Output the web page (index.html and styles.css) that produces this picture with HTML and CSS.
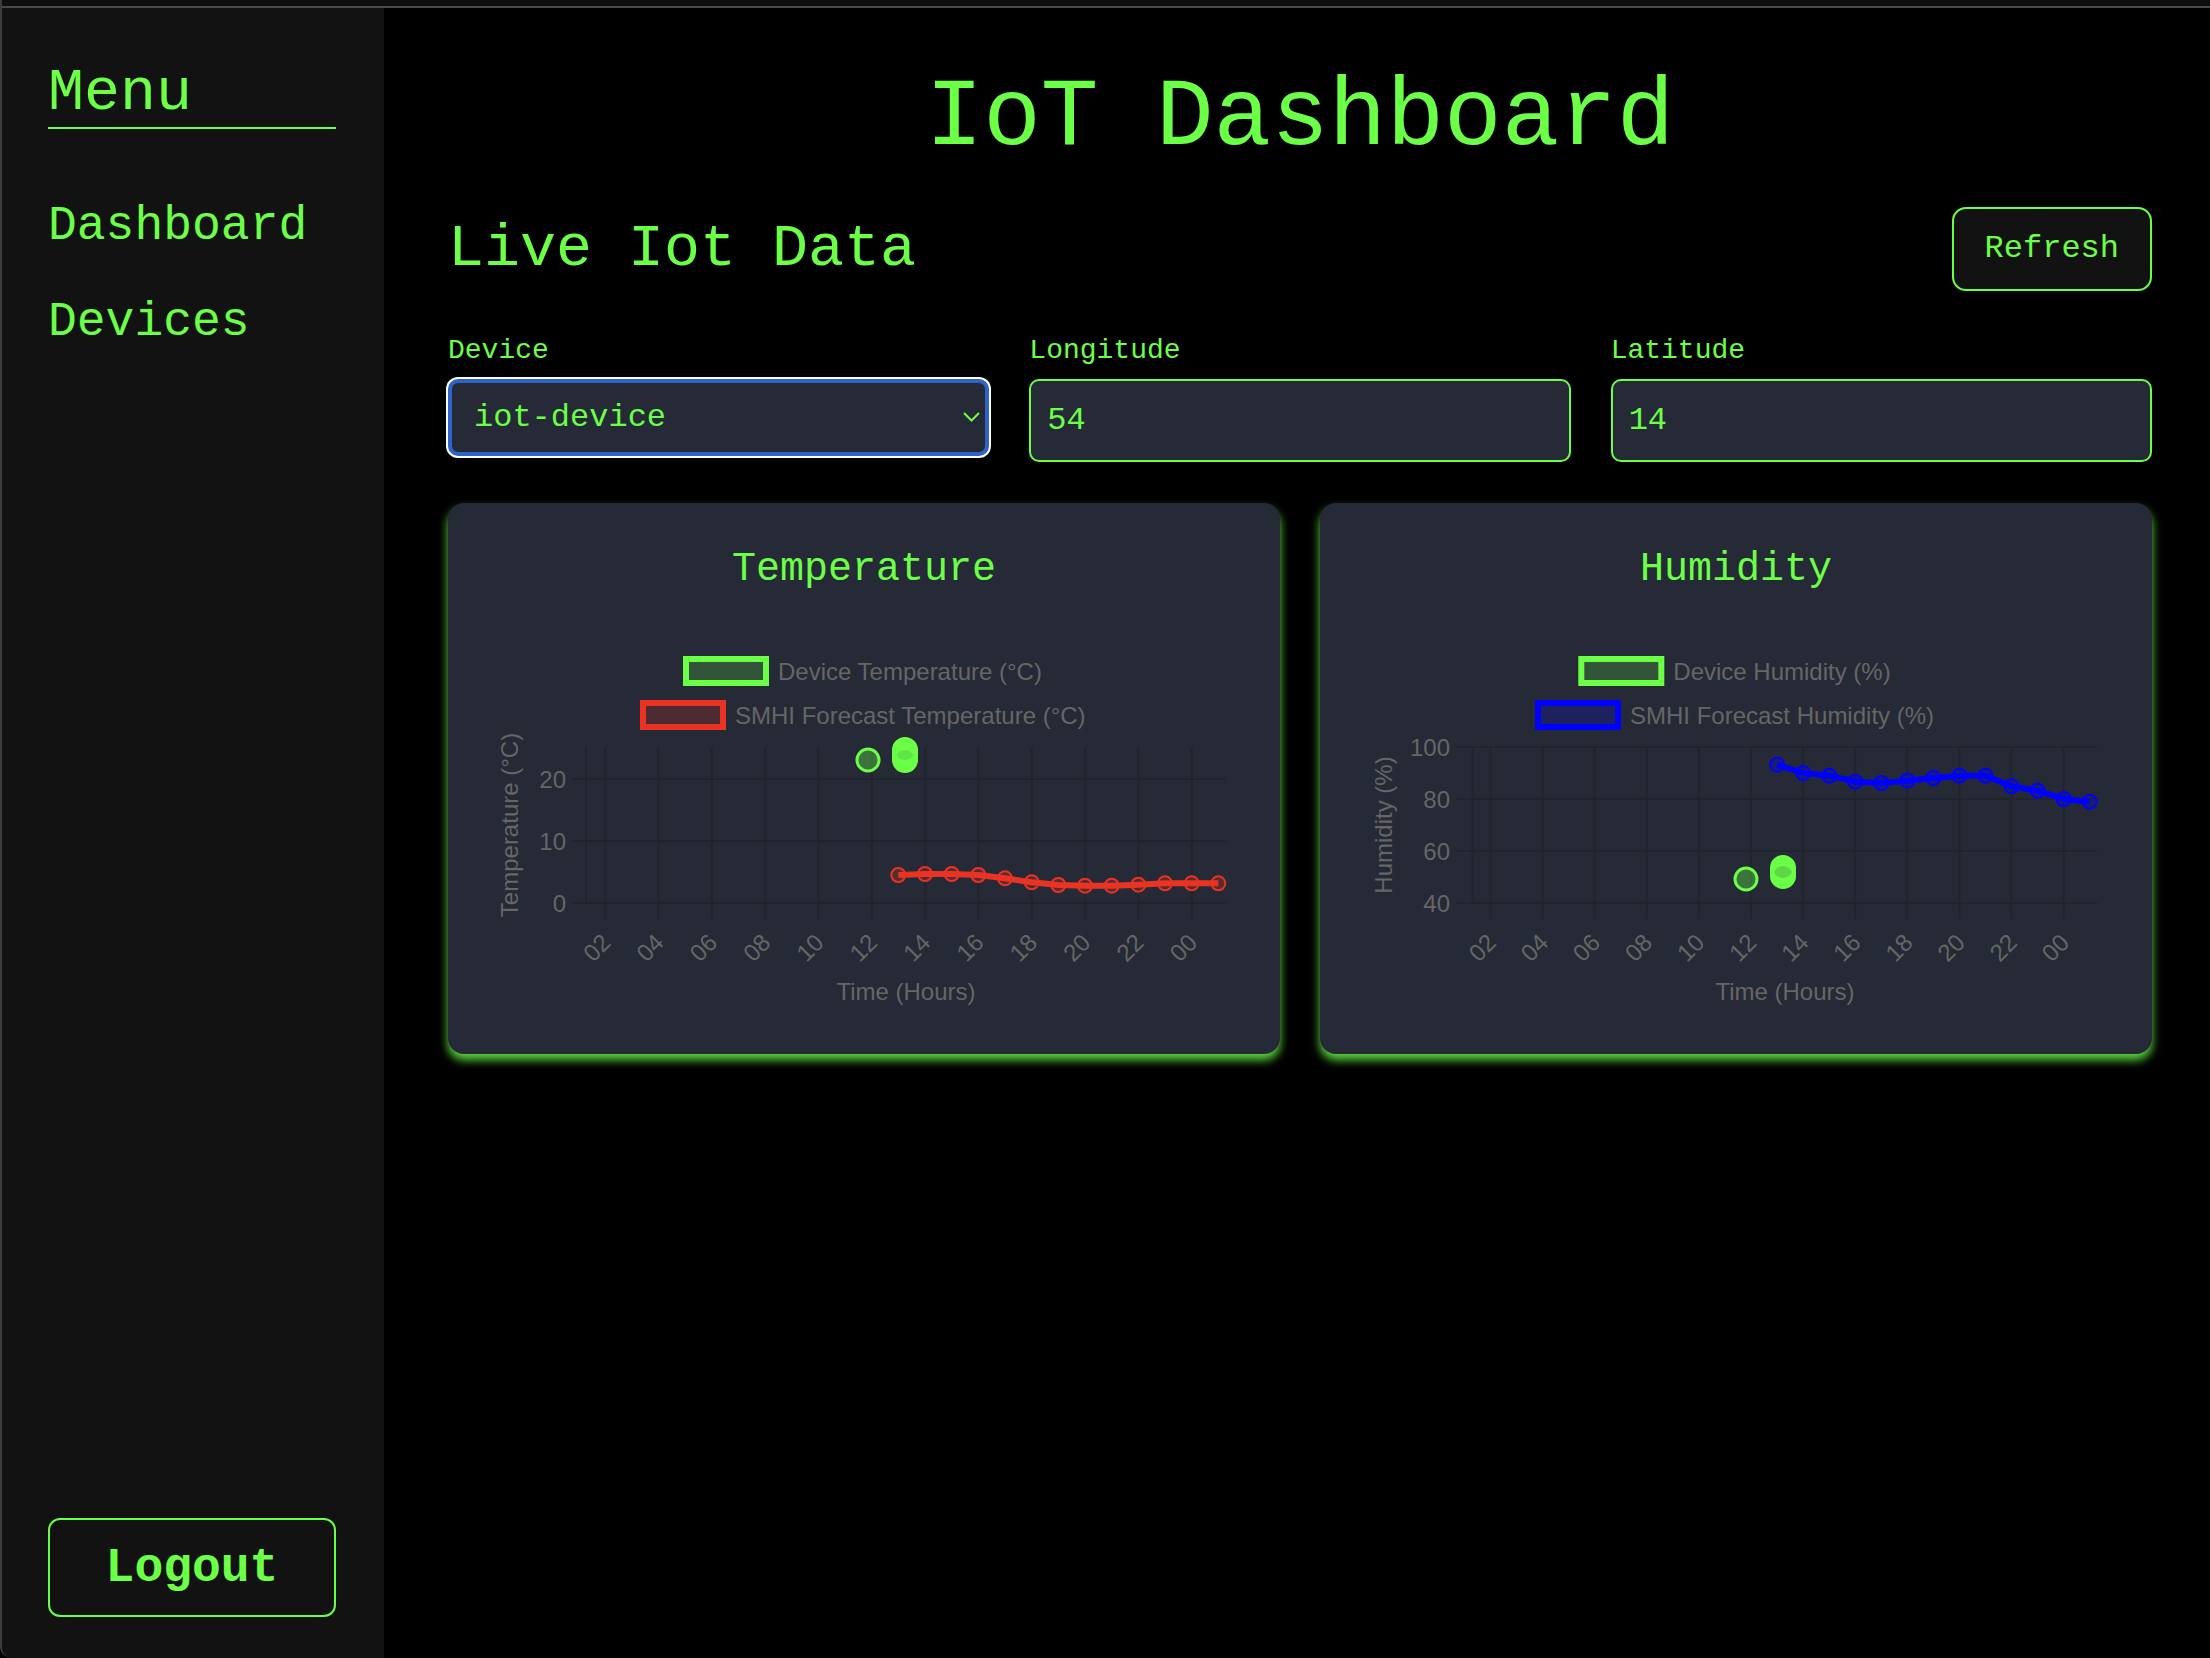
FILE: index.html
```html
<!DOCTYPE html>
<html lang="en">
<head>
<meta charset="utf-8">
<title>IoT Dashboard</title>
<link rel="stylesheet" href="styles.css">
</head>
<body>
<div class="window">
  <div class="titlebar"></div>
  <div class="app">
    <aside class="sidebar">
      <h2 class="menu-title">Menu</h2>
      <nav class="nav">
        <a href="#">Dashboard</a>
        <a href="#">Devices</a>
      </nav>
      <button class="logout">Logout</button>
    </aside>
    <main class="main">
      <h1 class="page-title">IoT Dashboard</h1>
      <div class="section-head">
        <h2 class="section-title">Live Iot Data</h2>
        <button class="refresh">Refresh</button>
      </div>
      <div class="fields">
        <div class="field">
          <label>Device</label>
          <div class="select-wrap">
            <select class="select"><option>iot-device</option></select>
            <svg class="chevron" viewBox="0 0 17 10" width="17" height="10"><path d="M1 1 L8.5 8.5 L16 1"/></svg>
          </div>
        </div>
        <div class="field">
          <label>Longitude</label>
          <input class="input" type="text" value="54">
        </div>
        <div class="field">
          <label>Latitude</label>
          <input class="input" type="text" value="14">
        </div>
      </div>
      <div class="cards">
        <section class="card">
          <h3 class="card-title">Temperature</h3>
          <svg class="chart" viewBox="0 0 832 461">
            <rect class="lg-green" x="238" y="66" width="80" height="24"/>
            <text class="lg-text" x="330" y="86.5">Device Temperature (°C)</text>
            <rect class="lg-red" x="195" y="110" width="80" height="24"/>
            <text class="lg-text" x="287" y="130.5">SMHI Forecast Temperature (°C)</text>
            <g class="grid">
              <line x1="138" y1="154" x2="138" y2="310"/>
              <line x1="157" y1="154" x2="157" y2="326"/>
              <line x1="210.3" y1="154" x2="210.3" y2="326"/>
              <line x1="263.7" y1="154" x2="263.7" y2="326"/>
              <line x1="317" y1="154" x2="317" y2="326"/>
              <line x1="370.3" y1="154" x2="370.3" y2="326"/>
              <line x1="423.7" y1="154" x2="423.7" y2="326"/>
              <line x1="477" y1="154" x2="477" y2="326"/>
              <line x1="530.3" y1="154" x2="530.3" y2="326"/>
              <line x1="583.7" y1="154" x2="583.7" y2="326"/>
              <line x1="637" y1="154" x2="637" y2="326"/>
              <line x1="690.3" y1="154" x2="690.3" y2="326"/>
              <line x1="743.7" y1="154" x2="743.7" y2="326"/>
              <line x1="124" y1="186" x2="778" y2="186"/>
              <line x1="124" y1="248" x2="778" y2="248"/>
              <line x1="124" y1="310" x2="778" y2="310"/>
            </g>
            <g class="axis-text">
              <text x="118" y="194.5" text-anchor="end">20</text>
              <text x="118" y="256.5" text-anchor="end">10</text>
              <text x="118" y="318.5" text-anchor="end">0</text>
              <text transform="translate(158,345) rotate(-45)" text-anchor="end" dominant-baseline="central">02</text>
              <text transform="translate(211.3,345) rotate(-45)" text-anchor="end" dominant-baseline="central">04</text>
              <text transform="translate(264.7,345) rotate(-45)" text-anchor="end" dominant-baseline="central">06</text>
              <text transform="translate(318,345) rotate(-45)" text-anchor="end" dominant-baseline="central">08</text>
              <text transform="translate(371.3,345) rotate(-45)" text-anchor="end" dominant-baseline="central">10</text>
              <text transform="translate(424.7,345) rotate(-45)" text-anchor="end" dominant-baseline="central">12</text>
              <text transform="translate(478,345) rotate(-45)" text-anchor="end" dominant-baseline="central">14</text>
              <text transform="translate(531.3,345) rotate(-45)" text-anchor="end" dominant-baseline="central">16</text>
              <text transform="translate(584.7,345) rotate(-45)" text-anchor="end" dominant-baseline="central">18</text>
              <text transform="translate(638,345) rotate(-45)" text-anchor="end" dominant-baseline="central">20</text>
              <text transform="translate(691.3,345) rotate(-45)" text-anchor="end" dominant-baseline="central">22</text>
              <text transform="translate(744.7,345) rotate(-45)" text-anchor="end" dominant-baseline="central">00</text>
              <text transform="translate(61,232) rotate(-90)" text-anchor="middle" dominant-baseline="central">Temperature (°C)</text>
              <text x="458" y="407" text-anchor="middle">Time (Hours)</text>
            </g>
            <polyline class="line-red" points="450.3,282 477,281 503.7,281 530.3,282 557,285.3 583.7,289.3 610.3,292 637,292.7 663.7,292.7 690.3,291.7 717,290.3 743.7,290.3 770.3,290.3"/>
            <g class="pt-red">
              <circle cx="450.3" cy="282" r="7"/><circle cx="477" cy="281" r="7"/><circle cx="503.7" cy="281" r="7"/>
              <circle cx="530.3" cy="282" r="7"/><circle cx="557" cy="285.3" r="7"/><circle cx="583.7" cy="289.3" r="7"/>
              <circle cx="610.3" cy="292" r="7"/><circle cx="637" cy="292.7" r="7"/><circle cx="663.7" cy="292.7" r="7"/>
              <circle cx="690.3" cy="291.7" r="7"/><circle cx="717" cy="290.3" r="7"/><circle cx="743.7" cy="290.3" r="7"/>
              <circle cx="770.3" cy="290.3" r="7"/>
            </g>
            <g class="pt-dev">
              <circle cx="420" cy="167" r="11"/>
              <circle cx="457" cy="157" r="11.5"/><circle cx="457" cy="159.5" r="11.5"/><circle cx="457" cy="162" r="11.5"/>
              <circle cx="457" cy="164.5" r="11.5"/><circle cx="457" cy="167" r="11.5"/>
            </g>
          </svg>
        </section>
        <section class="card">
          <h3 class="card-title">Humidity</h3>
          <svg class="chart" viewBox="0 0 832 461">
            <rect class="lg-green" x="261.3" y="66" width="80" height="24"/>
            <text class="lg-text" x="353.3" y="86.5">Device Humidity (%)</text>
            <rect class="lg-blue" x="218" y="110" width="80" height="24"/>
            <text class="lg-text" x="310" y="130.5">SMHI Forecast Humidity (%)</text>
            <g class="grid">
              <line x1="152.6" y1="154" x2="152.6" y2="310"/>
              <line x1="170.5" y1="154" x2="170.5" y2="326"/>
              <line x1="222.6" y1="154" x2="222.6" y2="326"/>
              <line x1="274.7" y1="154" x2="274.7" y2="326"/>
              <line x1="326.8" y1="154" x2="326.8" y2="326"/>
              <line x1="378.9" y1="154" x2="378.9" y2="326"/>
              <line x1="431" y1="154" x2="431" y2="326"/>
              <line x1="483.1" y1="154" x2="483.1" y2="326"/>
              <line x1="535.2" y1="154" x2="535.2" y2="326"/>
              <line x1="587.3" y1="154" x2="587.3" y2="326"/>
              <line x1="639.4" y1="154" x2="639.4" y2="326"/>
              <line x1="691.5" y1="154" x2="691.5" y2="326"/>
              <line x1="743.6" y1="154" x2="743.6" y2="326"/>
              <line x1="136" y1="154" x2="777.5" y2="154"/>
              <line x1="136" y1="206" x2="777.5" y2="206"/>
              <line x1="136" y1="258" x2="777.5" y2="258"/>
              <line x1="136" y1="310" x2="777.5" y2="310"/>
            </g>
            <g class="axis-text">
              <text x="130" y="162.5" text-anchor="end">100</text>
              <text x="130" y="214.5" text-anchor="end">80</text>
              <text x="130" y="266.5" text-anchor="end">60</text>
              <text x="130" y="318.5" text-anchor="end">40</text>
              <text transform="translate(171.5,345) rotate(-45)" text-anchor="end" dominant-baseline="central">02</text>
              <text transform="translate(223.6,345) rotate(-45)" text-anchor="end" dominant-baseline="central">04</text>
              <text transform="translate(275.7,345) rotate(-45)" text-anchor="end" dominant-baseline="central">06</text>
              <text transform="translate(327.8,345) rotate(-45)" text-anchor="end" dominant-baseline="central">08</text>
              <text transform="translate(379.9,345) rotate(-45)" text-anchor="end" dominant-baseline="central">10</text>
              <text transform="translate(432,345) rotate(-45)" text-anchor="end" dominant-baseline="central">12</text>
              <text transform="translate(484.1,345) rotate(-45)" text-anchor="end" dominant-baseline="central">14</text>
              <text transform="translate(536.2,345) rotate(-45)" text-anchor="end" dominant-baseline="central">16</text>
              <text transform="translate(588.3,345) rotate(-45)" text-anchor="end" dominant-baseline="central">18</text>
              <text transform="translate(640.4,345) rotate(-45)" text-anchor="end" dominant-baseline="central">20</text>
              <text transform="translate(692.5,345) rotate(-45)" text-anchor="end" dominant-baseline="central">22</text>
              <text transform="translate(744.6,345) rotate(-45)" text-anchor="end" dominant-baseline="central">00</text>
              <text transform="translate(63,232) rotate(-90)" text-anchor="middle" dominant-baseline="central">Humidity (%)</text>
              <text x="465" y="407" text-anchor="middle">Time (Hours)</text>
            </g>
            <polyline class="line-blue" points="457.1,171.7 483.1,180 509.2,182.7 535.2,188.7 561.3,190 587.3,187.7 613.4,185 639.4,182.7 665.5,182.7 691.5,193.3 717.6,197.7 743.6,206 769.7,208.7"/>
            <g class="pt-blue">
              <circle cx="457.1" cy="171.7" r="7"/><circle cx="483.1" cy="180" r="7"/><circle cx="509.2" cy="182.7" r="7"/>
              <circle cx="535.2" cy="188.7" r="7"/><circle cx="561.3" cy="190" r="7"/><circle cx="587.3" cy="187.7" r="7"/>
              <circle cx="613.4" cy="185" r="7"/><circle cx="639.4" cy="182.7" r="7"/><circle cx="665.5" cy="182.7" r="7"/>
              <circle cx="691.5" cy="193.3" r="7"/><circle cx="717.6" cy="197.7" r="7"/><circle cx="743.6" cy="206" r="7"/>
              <circle cx="769.7" cy="208.7" r="7"/>
            </g>
            <g class="pt-dev">
              <circle cx="426" cy="286" r="11"/>
              <circle cx="463" cy="275" r="11.5"/><circle cx="463" cy="277.5" r="11.5"/><circle cx="463" cy="280" r="11.5"/>
              <circle cx="463" cy="283" r="11.5"/>
            </g>
          </svg>
        </section>
      </div>
    </main>
  </div>
</div>
</body>
</html>
```
FILE: styles.css
```css
* { box-sizing: border-box; }

html, body {
  margin: 0;
  background: #000;
}

body {
  font-family: "Courier New", "Nimbus Mono PS", "Nimbus Mono L", "FreeMono", "Liberation Mono", monospace;
  color: #6bff47;
}

.window {
  height: 1658px;
  display: flex;
  flex-direction: column;
  border-left: 2px solid #3c3c3c;
  border-bottom-left-radius: 12px;
  overflow: hidden;
}

.titlebar {
  flex: none;
  height: 8px;
  background: #0e0e0e;
  border-bottom: 2px solid #4a4a4a;
}

.app {
  flex: 1;
  display: flex;
  min-height: 0;
}

/* Sidebar */
.sidebar {
  flex: none;
  width: 382px;
  background: #121212;
  display: flex;
  flex-direction: column;
  padding: 51px 48px 41px 46px;
}

.menu-title {
  margin: 0;
  font-size: 60px;
  line-height: 68px;
  font-weight: normal;
  border-bottom: 2px solid #6bff47;
}

.nav {
  display: flex;
  flex-direction: column;
  gap: 42px;
  margin-top: 70px;
}

.nav a {
  font-size: 48px;
  line-height: 54px;
  color: #6bff47;
  text-decoration: none;
}

.logout {
  margin-top: auto;
  height: 99px;
  width: 100%;
  background: transparent;
  border: 2px solid #6bff47;
  border-radius: 12px;
  color: #6bff47;
  font-family: inherit;
  font-size: 48px;
  line-height: 54px;
  font-weight: bold;
  padding: 0;
}

/* Main */
.main {
  flex: 1;
  min-width: 0;
  padding: 57px 58px 0 64px;
}

.page-title {
  margin: 0 0 34px;
  font-size: 96px;
  line-height: 108px;
  font-weight: normal;
  text-align: center;
}

.section-head {
  display: flex;
  align-items: center;
  justify-content: space-between;
}

.section-title {
  margin: 0;
  font-size: 60px;
  line-height: 68px;
  font-weight: normal;
}

.refresh {
  background: #121212;
  border: 2px solid #6bff47;
  border-radius: 14px;
  color: #6bff47;
  font-family: inherit;
  font-size: 32px;
  line-height: 36px;
  padding: 22px 31px;
}

.fields {
  display: grid;
  grid-template-columns: repeat(3, 1fr);
  gap: 40px;
  margin-top: 44px;
}

.field label {
  display: block;
  font-size: 28px;
  line-height: 32px;
  margin-bottom: 12px;
}

.input {
  display: block;
  width: 100%;
  height: 83px;
  background: #252a36;
  border: 2px solid #6bff47;
  border-radius: 10px;
  color: #6bff47;
  font-family: inherit;
  font-size: 32px;
  padding: 0 16px;
  outline: none;
}

.select-wrap {
  position: relative;
}

.select {
  display: block;
  width: 100%;
  height: 77px;
  appearance: none;
  -webkit-appearance: none;
  background: #252a36;
  border: 4px solid #2e63c9;
  box-shadow: 0 0 0 2px #ffffff;
  border-radius: 10px;
  color: #6bff47;
  font-family: inherit;
  font-size: 32px;
  padding: 0 22px;
  outline: none;
}

.chevron {
  position: absolute;
  right: 9px;
  top: 33px;
  fill: none;
  stroke: #6bff47;
  stroke-width: 2;
}

/* Cards */
.cards {
  display: grid;
  grid-template-columns: 1fr 1fr;
  gap: 40px;
  margin-top: 41px;
}

.card {
  background: #252a36;
  border-radius: 16px;
  box-shadow: 0 6px 10px rgba(107, 255, 71, 0.85);
}

.card-title {
  margin: 44px 0 0;
  font-size: 40px;
  line-height: 46px;
  font-weight: normal;
  text-align: center;
}

.chart {
  display: block;
  width: 100%;
  height: 461px;
}

.grid line {
  stroke: #20242e;
  stroke-width: 2;
}

.axis-text text,
.lg-text {
  font-family: "Liberation Sans", Arial, sans-serif;
  font-size: 24px;
  fill: #666666;
}

.lg-green {
  fill: rgba(107, 255, 71, 0.2);
  stroke: #6bff47;
  stroke-width: 6;
}

.lg-red {
  fill: rgba(234, 51, 35, 0.2);
  stroke: #ea3323;
  stroke-width: 6;
}

.lg-blue {
  fill: rgba(0, 0, 255, 0.2);
  stroke: #0000ff;
  stroke-width: 6;
}

.line-red {
  fill: none;
  stroke: #ea3323;
  stroke-width: 6;
  stroke-linejoin: round;
}

.pt-red circle {
  fill: rgba(234, 51, 35, 0.25);
  stroke: #ea3323;
  stroke-width: 2;
}

.line-blue {
  fill: none;
  stroke: #0000ff;
  stroke-width: 6;
  stroke-linejoin: round;
}

.pt-blue circle {
  fill: rgba(0, 0, 255, 0.25);
  stroke: #0000ff;
  stroke-width: 2;
}

.pt-dev circle {
  fill: rgba(107, 255, 71, 0.35);
  stroke: #6bff47;
  stroke-width: 3;
}
```
